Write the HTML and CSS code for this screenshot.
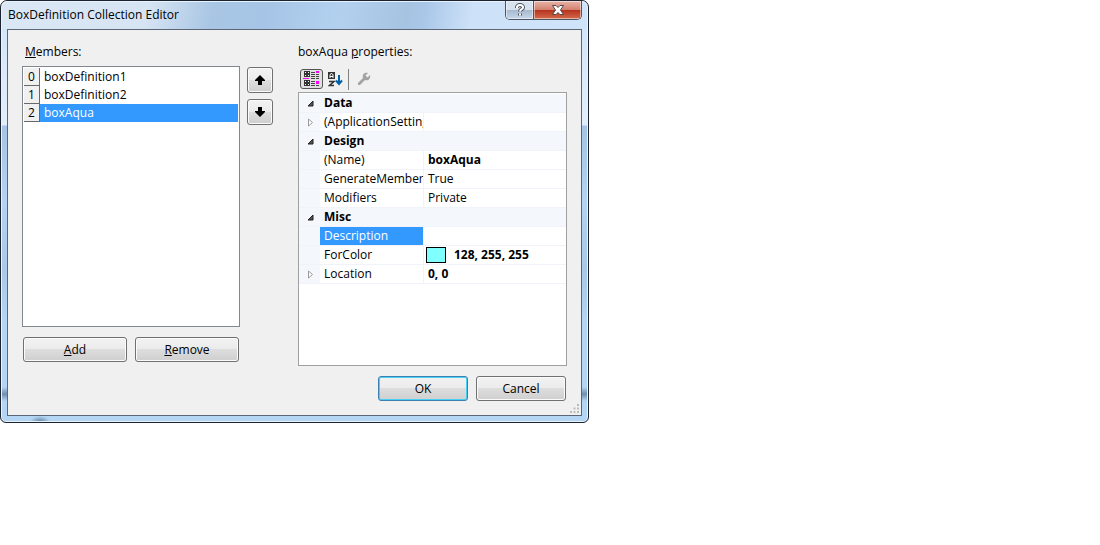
FILE: index.html
```html
<!DOCTYPE html>
<html lang="en">

<head>
    <meta charset="UTF-8">
    <meta name="viewport" content="width=device-width, initial-scale=1.0">
    <title>BoxDefinition Collection Editor</title>
    <link rel="stylesheet" href="styles.css">
</head>

<body>
    <main class="dialog" role="dialog" aria-labelledby="dialogTitle">
        <header class="titlebar">
            <h1 class="title" id="dialogTitle">BoxDefinition Collection Editor</h1>
            <div class="caption-buttons">
                <button type="button" class="caption help" aria-label="Help">
                    <svg width="12" height="14" viewBox="0 0 12 14">
                        <path d="M3 5V4.500a3 2.500 0 0 1 6 0c0 2-3 1.500-3 4M6 10.500v2" fill="none" stroke="#4b5261" stroke-width="4"/>
                        <path d="M3 5V4.500a3 2.500 0 0 1 6 0c0 2-3 1.500-3 4M6 10.500v2" fill="none" stroke="#fff" stroke-width="2"/>
                    </svg>
                </button>
                <button type="button" class="caption close" aria-label="Close">
                    <svg width="14" height="12" viewBox="0 0 14 12">
                        <path d="M1.500 1.500H5L7 3.500 9 1.500H12.500L9.500 6 12.500 10.500H9L7 8.500 5 10.500H1.500L4.500 6z" fill="#fff" stroke="#56464e"/>
                    </svg>
                </button>
            </div>
        </header>

        <form class="client">
            <div class="panes">
                <section class="members">
                    <h2 class="label" id="membersLabel"><u>M</u>embers:</h2>
                    <div class="members-row">
                        <ul class="member-list" role="listbox" aria-labelledby="membersLabel" tabindex="0">
                            <li class="member" role="option"><span class="index">0</span><span class="member-name">boxDefinition1</span></li>
                            <li class="member" role="option"><span class="index">1</span><span class="member-name">boxDefinition2</span></li>
                            <li class="member selected" role="option" aria-selected="true"><span class="index">2</span><span class="member-name">boxAqua</span></li>
                        </ul>
                        <div class="move-buttons">
                            <button type="button" class="button move" aria-label="Move up">
                                <svg width="10" height="10" viewBox="0 0 10 10"><path d="M5 0l5 5v1H7v4H3V6H0V5z"/></svg>
                            </button>
                            <button type="button" class="button move" aria-label="Move down">
                                <svg width="10" height="10" viewBox="0 0 10 10"><path d="M5 10l5-5V4H7V0H3v4H0v1z"/></svg>
                            </button>
                        </div>
                    </div>
                    <div class="edit-buttons">
                        <button type="button" class="button"><u>A</u>dd</button>
                        <button type="button" class="button"><u>R</u>emove</button>
                    </div>
                </section>

                <section class="properties">
                    <h2 class="label">boxAqua <u>p</u>roperties:</h2>
                    <div class="toolbar">
                        <button type="button" class="tool active" aria-label="Categorized" aria-pressed="true">
                            <svg width="17" height="16" viewBox="0 0 17 16" shape-rendering="crispEdges">
                                <path d="M1 0h6v6H1zM1 9h6v6H1z" fill="#333"/>
                                <path d="M2 1h4v4H2zM2 10h4v4H2z" fill="#fff"/>
                                <path d="M2 2h4v2H2zM3 1h2v4H3zM2 11h4v2H2zM3 10h2v4H3z" fill="#333"/>
                                <path d="M8 1h4v1H8zM8 3h4v1H8zM8 5h4v1H8zM8 7h4v1H8zM8 10h4v1H8zM8 12h4v1H8zM8 14h4v1H8zM13 3h3v1h-3zM13 5h3v1h-3zM13 7h3v1h-3zM13 14h3v1h-3z" fill="#444"/>
                                <path d="M0 7h6v1H0zM13 0h3v2h-3zM13 10h3v3h-3z" fill="#f0f"/>
                            </svg>
                        </button>
                        <button type="button" class="tool" aria-label="Alphabetical">
                            <svg width="15" height="15" viewBox="0 0 15 15">
                                <path d="M0 0h7v7H0z" fill="#333"/>
                                <path d="M2 6V2.500L3.500 1.500 5 2.500V6M2 4.500h3" fill="none" stroke="#fff"/>
                                <path d="M1 9.500h5L1.500 13.500H6" fill="none" stroke="#333" stroke-width="1.500"/>
                                <path d="M11 3v9M8 8.500l3 3.500 3-3.500" fill="none" stroke="#0060a8" stroke-width="2"/>
                            </svg>
                        </button>
                        <span class="separator"></span>
                        <button type="button" class="tool" aria-label="Property pages" disabled>
                            <svg width="14" height="14" viewBox="0 0 14 14">
                                <path d="M1 11L6 6C5 3 7 0 11 1L8.500 3.500 10.500 5.500 13 3C14 7 11 9 8 8L3 13C1 13.500 .5 12 1 11z" fill="#a3a3a3"/>
                            </svg>
                        </button>
                    </div>
                    <div class="grid">
                        <table class="property-table">
                            <colgroup>
                                <col class="gutter-col">
                                <col class="name-col">
                                <col>
                            </colgroup>
                            <tbody>
                                <tr class="category">
                                    <td class="gutter"><button type="button" class="expander" aria-label="Collapse Data"><svg width="7" height="7" viewBox="0 0 7 7"><path d="M6 1v5H1z" fill="#555" stroke="#222"/></svg></button></td>
                                    <th colspan="2">Data</th>
                                </tr>
                                <tr>
                                    <td class="gutter"><button type="button" class="expander" aria-label="Expand ApplicationSettings"><svg width="7" height="9" viewBox="0 0 7 9"><path d="M1.500 1v7L5.500 4.500z" fill="#fff" stroke="#999"/></svg></button></td>
                                    <td class="name">(ApplicationSettings)</td>
                                    <td class="value"></td>
                                </tr>
                                <tr class="category">
                                    <td class="gutter"><button type="button" class="expander" aria-label="Collapse Design"><svg width="7" height="7" viewBox="0 0 7 7"><path d="M6 1v5H1z" fill="#555" stroke="#222"/></svg></button></td>
                                    <th colspan="2">Design</th>
                                </tr>
                                <tr>
                                    <td class="gutter"></td>
                                    <td class="name">(Name)</td>
                                    <td class="value changed">boxAqua</td>
                                </tr>
                                <tr>
                                    <td class="gutter"></td>
                                    <td class="name">GenerateMember</td>
                                    <td class="value">True</td>
                                </tr>
                                <tr>
                                    <td class="gutter"></td>
                                    <td class="name">Modifiers</td>
                                    <td class="value">Private</td>
                                </tr>
                                <tr class="category">
                                    <td class="gutter"><button type="button" class="expander" aria-label="Collapse Misc"><svg width="7" height="7" viewBox="0 0 7 7"><path d="M6 1v5H1z" fill="#555" stroke="#222"/></svg></button></td>
                                    <th colspan="2">Misc</th>
                                </tr>
                                <tr class="current">
                                    <td class="gutter"></td>
                                    <td class="name"><label for="description">Description</label></td>
                                    <td class="value"><input type="text" class="value-input" id="description"></td>
                                </tr>
                                <tr>
                                    <td class="gutter"></td>
                                    <td class="name">ForColor</td>
                                    <td class="value changed"><div class="color"><span class="swatch"></span>128, 255, 255</div></td>
                                </tr>
                                <tr>
                                    <td class="gutter"><button type="button" class="expander" aria-label="Expand Location"><svg width="7" height="9" viewBox="0 0 7 9"><path d="M1.500 1v7L5.500 4.500z" fill="#fff" stroke="#999"/></svg></button></td>
                                    <td class="name">Location</td>
                                    <td class="value changed">0, 0</td>
                                </tr>
                            </tbody>
                        </table>
                    </div>
                </section>
            </div>

            <footer class="actions">
                <button type="submit" class="button default">OK</button>
                <button type="button" class="button">Cancel</button>
            </footer>
            <svg class="grip" width="9" height="9" viewBox="0 0 9 9">
                <path d="M7 0h2v2H7zM7 3.500h2v2H7zM7 7h2v2H7zM3.500 3.500h2v2h-2zM3.500 7h2v2h-2zM0 7h2v2H0z" fill="#bbb"/>
            </svg>
        </form>
    </main>
</body>

</html>
```
FILE: styles.css
```css
* {
    box-sizing: border-box;
}

body {
    margin: 0;
    background: #fff;
    color: #000;
    font-family: "Open Sans", "Segoe UI", sans-serif;
    font-size: 12px;
    line-height: 18px;
}

button,
input {
    font: inherit;
    color: inherit;
}

.dialog {
    width: 100%;
    max-width: 589px;
    padding: 0 6px 6px;
    border: 1px solid #1b2230;
    border-radius: 7px 7px 6px 6px;
    box-shadow: inset 0 0 0 1px #e9f3fd;
    background:
        radial-gradient(ellipse 10px 6px at 39px 100%, #5f7f9f, transparent),
        linear-gradient(transparent 386px, #6f8dad 393px, transparent 400px),
        linear-gradient(#cfe3f9, #e3eefb 124px, #a5c4e6 125px, #b5d3f3 200px, #a9c8ea 270px, #b5d5f5 320px);
}

.titlebar {
    display: flex;
    justify-content: space-between;
    height: 28px;
    margin: 0 -5px;
    padding: 0 5px 0 6px;
    border-radius: 6px 6px 0 0;
    box-shadow: inset 0 1px 0 #e9f3fd;
    background: linear-gradient(100deg, #dbe7f4, #d6e4f3 25%, #a9c6e4 36%, #a6c5e6 45%, #b3d1ef 58%, #a6c3e2 69%, #a9c7e8 72%, #cde1f8 80%, #cfe3f9);
}

.title {
    margin: 5px 0 0;
    font-size: 12px;
    font-weight: normal;
}

.caption-buttons {
    display: flex;
    height: 19px;
    border: 1px solid #4c5563;
    border-top: 0;
    border-radius: 0 0 5px 5px;
    overflow: hidden;
}

.caption {
    display: flex;
    align-items: center;
    justify-content: center;
    padding: 0;
    border: 0;
    box-shadow: inset 0 0 0 1px rgba(255, 255, 255, 0.5);
}

.help {
    width: 28px;
    border-right: 1px solid #4c5563;
    background: linear-gradient(#d6e2ee 50%, #a5b8cd 50%, #c6d8ea);
}

.close {
    width: 47px;
    background: linear-gradient(#e8b5a8, #d3806e 50%, #b5321d 50%, #d46a4b);
}

.client {
    position: relative;
    padding: 13px 14px;
    border: 1px solid #5b6776;
    background: #f0f0f0;
}

.panes {
    display: flex;
    gap: 25px;
}

.members {
    flex: 251 1 0;
    padding-bottom: 4px;
}

.properties {
    display: flex;
    flex: 269 1 0;
    flex-direction: column;
    min-width: 0;
}

.label {
    margin: 0 0 5px 3px;
    font-size: 12px;
    font-weight: normal;
}

.properties .label {
    margin-left: 0;
}

.members-row {
    display: flex;
    gap: 7px;
}

.member-list {
    flex: 1;
    min-height: 261px;
    margin: 0;
    padding: 1px;
    border: 1px solid #828790;
    background: #fff;
    list-style: none;
}

.member {
    display: flex;
    height: 18px;
}

.index {
    width: 16px;
    border-right: 1px solid #696969;
    border-bottom: 1px solid #696969;
    background: #f0f0f0;
    text-align: center;
}

.member-name {
    flex: 1;
    padding-left: 4px;
}

.selected .member-name {
    background: #39f;
    color: #fff;
}

.move-buttons {
    display: flex;
    flex-direction: column;
    gap: 6px;
    padding-top: 1px;
}

.button {
    padding: 0 8px;
    border: 1px solid #707070;
    border-radius: 3px;
    box-shadow: inset 0 0 0 1px #fbfbfb;
    background: linear-gradient(#f2f2f2, #ebebeb 50%, #ddd 50%, #cfcfcf);
}

.move {
    display: flex;
    align-items: center;
    justify-content: center;
    width: 26px;
    height: 26px;
    padding: 0;
}

.edit-buttons {
    display: flex;
    gap: 8px;
    margin: 10px 34px 0 1px;
}

.edit-buttons .button {
    flex: 1;
    height: 25px;
}

.toolbar {
    display: flex;
    align-items: center;
    gap: 3px;
    height: 26px;
    padding-left: 2px;
}

.tool {
    display: flex;
    align-items: center;
    justify-content: center;
    height: 20px;
    padding: 0 2px;
    border: 0;
    background: none;
}

.tool.active {
    width: 23px;
    border: 1px solid #555;
    border-radius: 3px;
    background: #e0e0e0;
}

.separator {
    width: 1px;
    height: 21px;
    margin-right: 3px;
    background: #808080;
}

.grid {
    flex: 1;
    padding-top: 1px;
    border: 1px solid #a0a0a0;
    background: #fff;
}

.property-table {
    width: 100%;
    border-collapse: separate;
    border-spacing: 0;
    table-layout: fixed;
}

.gutter-col {
    width: 21px;
}

.name-col {
    width: 104px;
}

.property-table td,
.property-table th {
    height: 19px;
    padding: 0 4px;
    border-bottom: 1px solid #f0f3f9;
    overflow: hidden;
    font-weight: normal;
    text-align: left;
    white-space: nowrap;
}

.property-table .gutter {
    padding: 0 0 0 8px;
    background: #f4f7fc;
}

.property-table .name {
    padding-right: 0;
    border-right: 1px solid #f0f3f9;
}

.property-table .category th {
    background: #f4f7fc;
    font-weight: bold;
}

.property-table .changed {
    font-weight: bold;
}

.property-table .current .name {
    background: #39f;
    color: #fff;
}

.expander {
    display: flex;
    padding: 0;
    border: 0;
    background: none;
}

.value-input {
    display: block;
    width: 100%;
    height: 18px;
    padding: 0;
    border: 0;
    outline: 0;
}

.color {
    display: flex;
    align-items: center;
    gap: 8px;
    margin-left: -2px;
}

.swatch {
    width: 20px;
    height: 16px;
    border: 1px solid #000;
    background: #80ffff;
}

.actions {
    display: flex;
    justify-content: flex-end;
    gap: 8px;
    margin: 10px 1px 1px 0;
}

.actions .button {
    width: 90px;
    height: 25px;
}

.actions .default {
    border-color: #3c7fb1;
    box-shadow: inset 0 0 0 1px #48d0f5;
}

.grip {
    position: absolute;
    right: 2px;
    bottom: 2px;
}
```
